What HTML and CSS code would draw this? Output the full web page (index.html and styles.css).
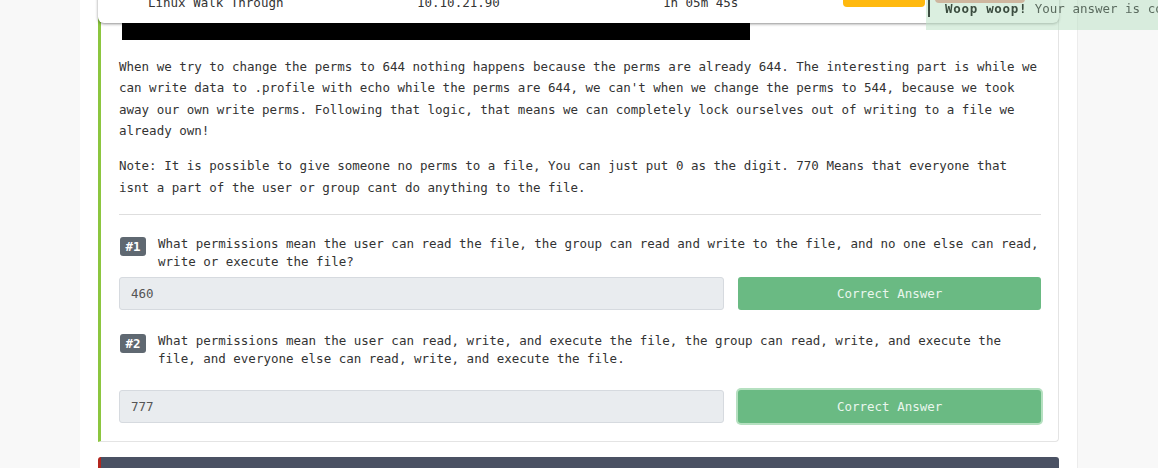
FILE: index.html
```html
<!DOCTYPE html>
<html lang="en">
<head>
<meta charset="utf-8">
<title>Linux Walk Through</title>
<link rel="stylesheet" href="styles.css">
</head>
<body>
<div class="page">
  <div class="machine-bar">
    <span class="mb-title">Linux Walk Through</span>
    <span class="mb-ip">10.10.21.90</span>
    <span class="mb-time">1h 05m 45s</span>
    <div class="mb-actions">
      <span class="mb-btn mb-btn--yellow"></span>
      <span class="mb-btn mb-btn--red"></span>
    </div>
  </div>

  <section class="task-card">
    <div class="task-image"></div>
    <p class="task-text">When we try to change the perms to 644 nothing happens because the perms are already 644. The interesting part is while we can write data to .profile with echo while the perms are 644, we can't when we change the perms to 544, because we took away our own write perms. Following that logic, that means we can completely lock ourselves out of writing to a file we already own!</p>
    <p class="task-text">Note: It is possible to give someone no perms to a file, You can just put 0 as the digit. 770 Means that everyone that isnt a part of the user or group cant do anything to the file.</p>
    <hr class="task-rule">

    <div class="question">
      <span class="q-badge">#1</span>
      <p class="q-text">What permissions mean the user can read the file, the group can read and write to the file, and no one else can read, write or execute the file?</p>
    </div>
    <div class="answer-row">
      <div class="answer-input">460</div>
      <div class="answer-btn">Correct Answer</div>
    </div>

    <div class="question question--spaced">
      <span class="q-badge">#2</span>
      <p class="q-text">What permissions mean the user can read, write, and execute the file, the group can read, write, and execute the file, and everyone else can read, write, and execute the file.</p>
    </div>
    <div class="answer-row">
      <div class="answer-input">777</div>
      <div class="answer-btn answer-btn--focus">Correct Answer</div>
    </div>
  </section>

  <div class="next-task"></div>
</div>

<div class="toast"><strong>Woop woop!</strong> Your answer is correct</div>
</body>
</html>
```

FILE: styles.css
```css
* { box-sizing: border-box; }

html, body { height: 100%; }

body {
  margin: 0;
  background: #f8f8f8;
  font-family: "DejaVu Sans Mono", "Liberation Mono", monospace;
  font-size: 12.5px;
  color: #333;
  overflow: hidden;
}

.page {
  position: relative;
  margin-left: 80px;
  width: 998px;
  min-height: 100%;
  background: #fff;
  border-right: 1px solid #ececec;
  padding: 0 18px;
}

/* floating machine bar */
.machine-bar {
  position: absolute;
  top: -18px;
  left: 18px;
  right: 18px;
  height: 41px;
  background: #fff;
  border-radius: 6px;
  box-shadow: 0 1px 3px rgba(0, 0, 0, 0.45);
  padding-left: 50px;
  display: grid;
  grid-template-columns: 269px 246px 180px 1fr;
  align-items: center;
  z-index: 2;
  color: #333;
}

.mb-actions {
  align-self: start;
  margin-top: -1px;
  display: flex;
  gap: 10px;
}

.mb-btn {
  display: block;
  height: 26px;
  border-radius: 4px;
}

.mb-btn--yellow { width: 82px; background: #ffb90f; }
.mb-btn--red { width: 90px; height: 22px; background: #e3806f; }

/* task card */
.task-card {
  border: 1px solid #e4e4e4;
  border-top: 0;
  border-left: 3px solid #8cc63f;
  border-radius: 0 0 4px 0;
  padding: 0 17px 18px 18px;
  margin-bottom: 15px;
}

.task-image {
  width: 628px;
  height: 40px;
  margin-left: 3px;
  margin-bottom: 16px;
  background: #000;
}

.task-text {
  margin: 0 0 14px;
  line-height: 21.33px;
}

.task-rule {
  margin: 16px 0 20px;
  border: 0;
  border-top: 1px solid #dedede;
}

.question {
  display: flex;
  align-items: flex-start;
  gap: 12px;
}

.question--spaced { margin-top: 22px; }

.q-badge {
  flex: none;
  margin-top: 2px;
  margin-left: 1px;
  height: 19px;
  line-height: 19px;
  padding: 0 5.5px;
  border-radius: 3px;
  background: #5f6871;
  color: #fff;
  font-weight: bold;
}

.q-text {
  margin: 0;
  line-height: 18px;
}

.question + .answer-row { margin-top: 6px; }
.question--spaced + .answer-row { margin-top: 22px; }

.answer-row {
  display: grid;
  grid-template-columns: 2fr 1fr;
  gap: 14px;
}

.answer-input {
  height: 33px;
  line-height: 31px;
  padding: 0 11px;
  background: #e9ecef;
  border: 1px solid #d6dadf;
  border-radius: 3px;
  color: #555;
}

.answer-btn {
  height: 33px;
  line-height: 33px;
  text-align: center;
  background: #6aba83;
  color: #e9f6ed;
  border-radius: 3px;
}

.answer-btn--focus {
  box-shadow: 0 0 0 2px #b5e0c0;
}

.next-task {
  height: 40px;
  background: #4a5163;
  border-left: 3px solid #b3261e;
  border-radius: 3px 3px 0 0;
}

/* toast */
.toast {
  position: fixed;
  top: 0;
  left: 926px;
  right: 0;
  height: 30px;
  padding-left: 19px;
  line-height: 17px;
  background: rgba(190, 226, 198, 0.55);
  color: #5b6b5f;
  white-space: nowrap;
  overflow: hidden;
  z-index: 5;
}

.toast::before {
  content: "";
  position: absolute;
  left: 2px;
  top: 0;
  width: 2px;
  height: 17px;
  background: #3d4d41;
}

.toast strong {
  color: #3b4c3f;
  letter-spacing: 0.7px;
}
```
